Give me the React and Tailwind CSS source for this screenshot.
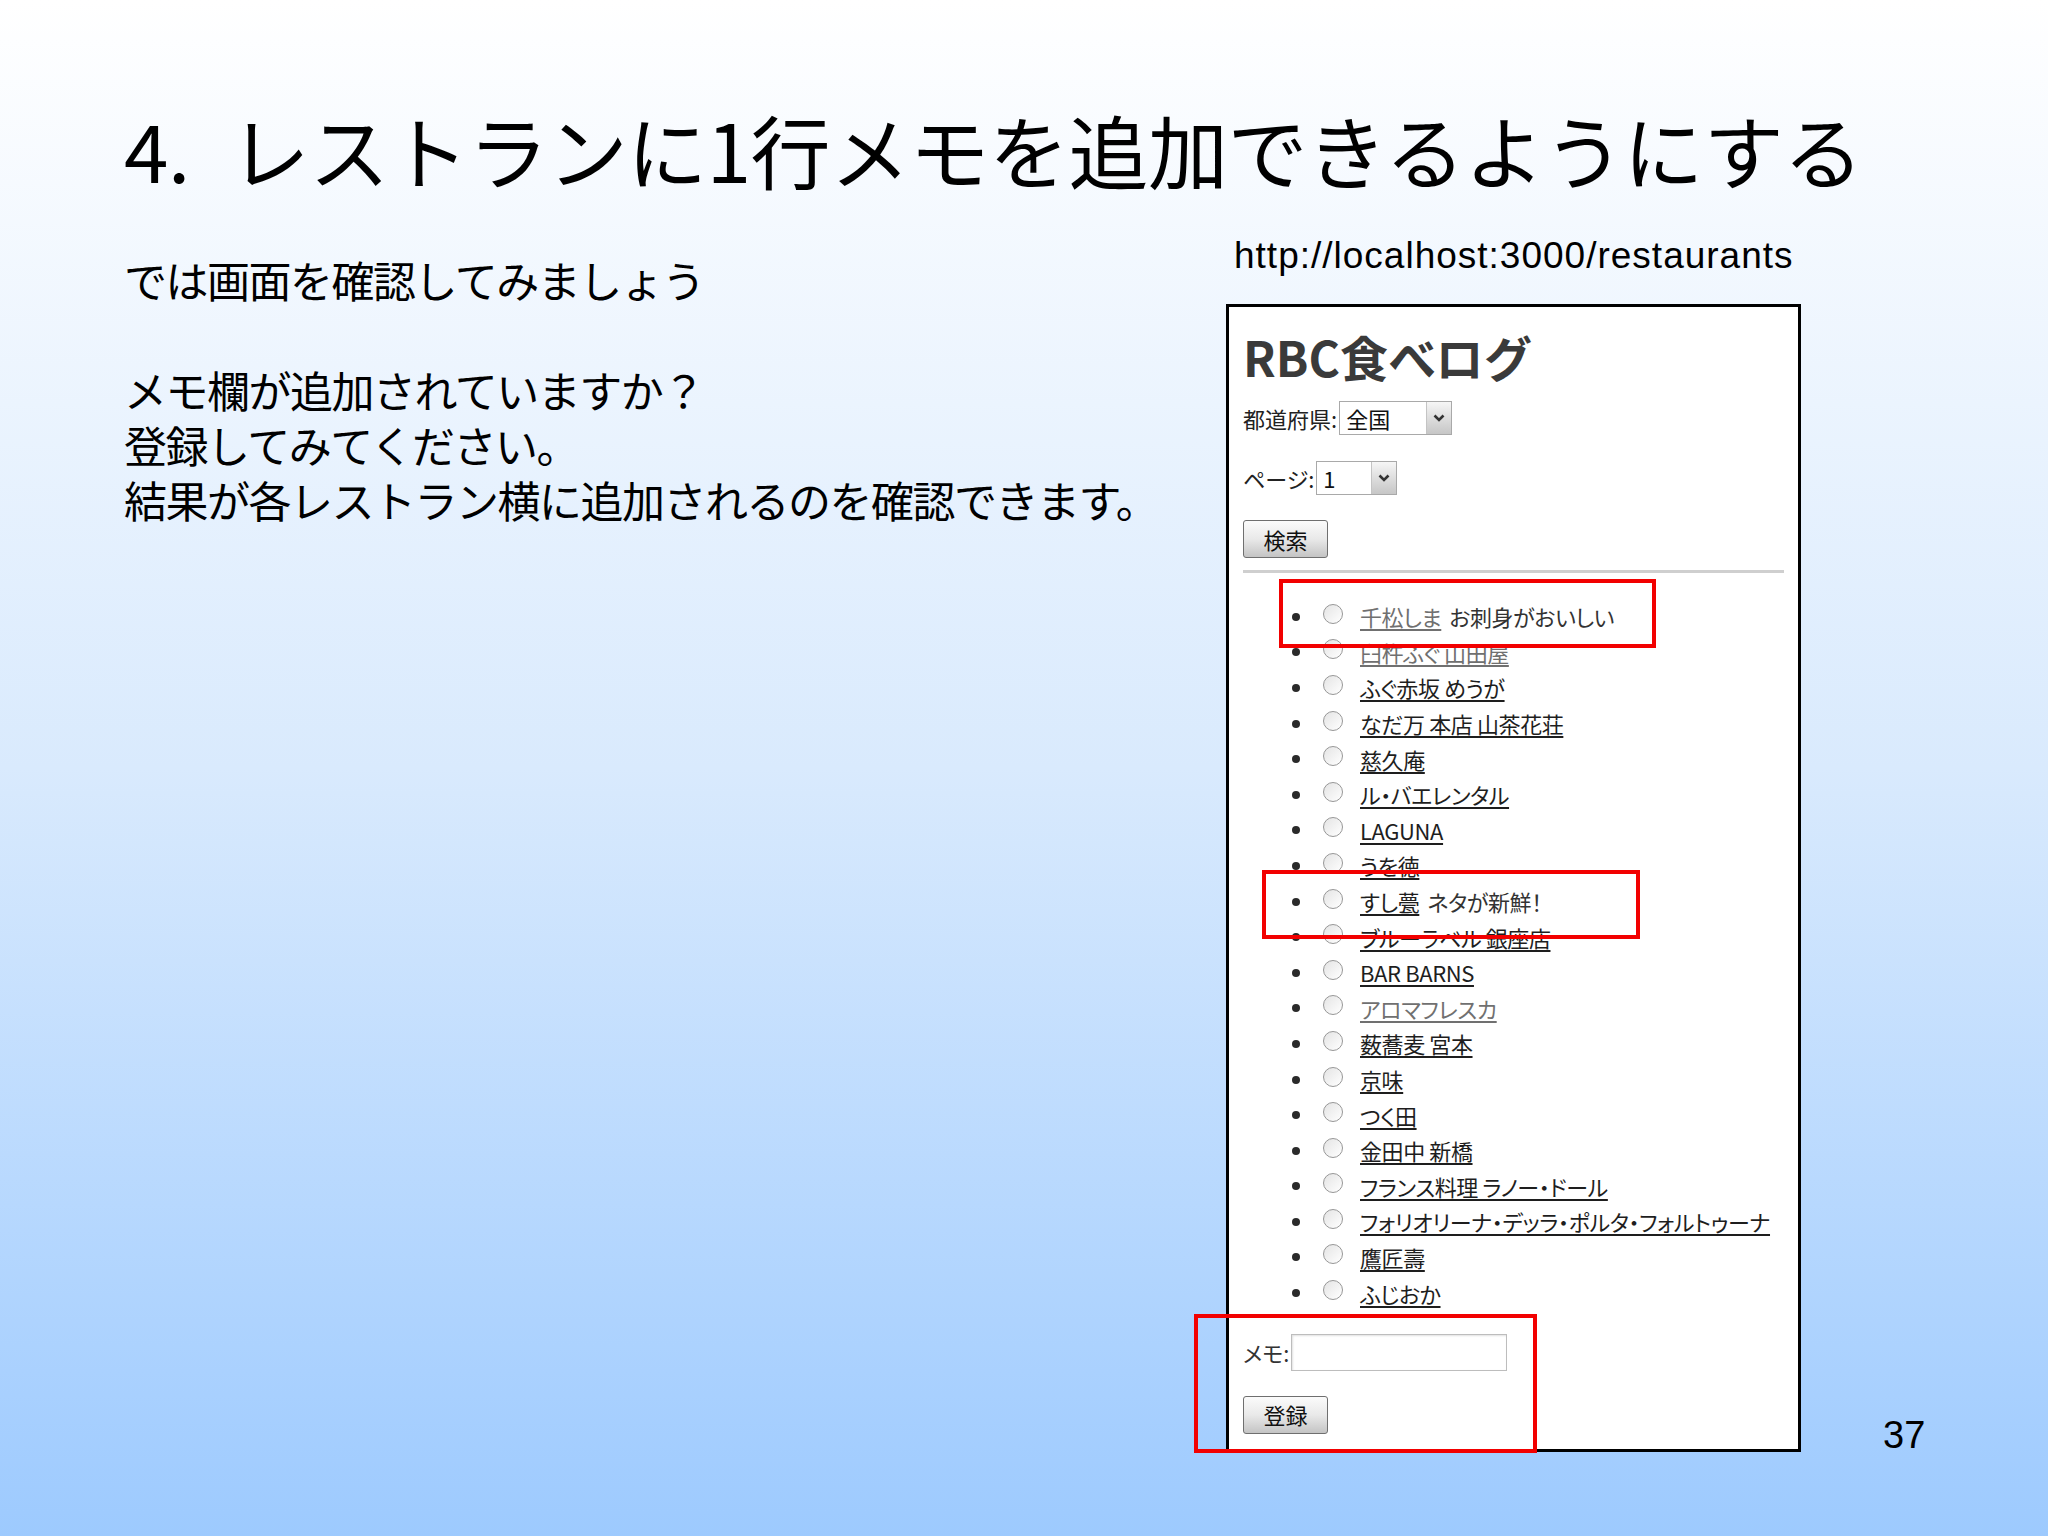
import React from 'react';

const restaurants = [
  { name: '千松しま', memo: 'お刺身がおいしい', visited: true },
  { name: '臼杵ふぐ 山田屋', visited: true },
  { name: 'ふぐ赤坂 めうが' },
  { name: 'なだ万 本店 山茶花荘' },
  { name: '慈久庵' },
  { name: 'ル・バエレンタル' },
  { name: 'LAGUNA' },
  { name: 'うを徳' },
  { name: 'すし甍', memo: 'ネタが新鮮！' },
  { name: 'ブルーラベル 銀座店' },
  { name: 'BAR BARNS' },
  { name: 'アロマフレスカ', visited: true },
  { name: '薮蕎麦 宮本' },
  { name: '京味' },
  { name: 'つく田' },
  { name: '金田中 新橋' },
  { name: 'フランス料理 ラノー・ドール' },
  { name: 'フォリオリーナ・デッラ・ポルタ・フォルトゥーナ' },
  { name: '鷹匠壽' },
  { name: 'ふじおか' },
];

// fake select box like old IE/XP
const SelectBox = ({ value, width }) => (
  <div className={`flex h-[34px] border border-[#a9a9a9] bg-white ${width}`}>
    <span className="flex-1 pl-[6px] leading-[32px] text-[#111]">{value}</span>
    <span className="flex w-[25px] items-center justify-center border-l border-[#c4c4c4] bg-gradient-to-b from-[#f6f6f6] to-[#c6c6c6]">
      <svg width="12" height="8" viewBox="0 0 12 8">
        <path d="M1.5 1.5 L6 6 L10.5 1.5" fill="none" stroke="#333" strokeWidth="2.6" />
      </svg>
    </span>
  </div>
);

const OldButton = ({ label }) => (
  <div className="flex h-[38px] w-[85px] items-center justify-center rounded-[3px] border border-[#6f6f6f] bg-gradient-to-b from-[#fbfbfb] via-[#e9e9e9] to-[#c4c4c4] text-[#111]">
    {label}
  </div>
);

const App = () => {
  return (
    <div className="relative h-[1536px] w-[2048px] overflow-hidden bg-gradient-to-b from-[#ffffff] via-[#d9eafd] to-[#9dcafe] pl-[124px] pt-[109px] font-['Noto_Sans_CJK_JP',sans-serif] text-black">
      <h1 className="flex h-[78px] items-center whitespace-nowrap text-[80px] leading-none tracking-[-0.5px]">
        <span>4.</span>
        <span className="ml-[40px]">レストランに1行メモを追加できるようにする</span>
      </h1>

      <div className="mt-[46px] flex">
        {/* left column */}
        <div className="w-[1102px] pt-[19px] text-[43px] leading-[55px] tracking-[-1.5px]">
          <p>では画面を確認してみましょう</p>
          <p className="mt-[55px]">メモ欄が追加されていますか？</p>
          <p>登録してみてください。</p>
          <p>結果が各レストラン横に追加されるのを確認できます。</p>
        </div>

        {/* right column: browser capture */}
        <div className="w-[575px]">
          <p className="pl-[8px] font-['Liberation_Sans',sans-serif] text-[37px] leading-[46px] tracking-[1px]">
            http://localhost:3000/restaurants
          </p>

          <div className="relative mt-[25px] h-[1148px] border-[3px] border-black bg-white pl-[14px] pr-[14px] text-[22px] text-[#222] [font-feature-settings:'palt']">
            <div className="mt-[21px] flex h-[56px] items-center text-[48px] font-bold text-[#3a3a3a]">
              RBC食べログ
            </div>

            <div className="mt-[17px] flex h-[34px] items-center">
              <span className="mr-[2px]">都道府県:</span>
              <SelectBox value="全国" width="w-[113px]" />
            </div>

            <div className="mt-[26px] flex h-[34px] items-center">
              <span className="mr-[2px]">ページ:</span>
              <SelectBox value="1" width="w-[81px]" />
            </div>

            <div className="mt-[25px] flex">
              <OldButton label="検索" />
            </div>

            <div className="mt-[12px] h-[3px] bg-[#cfcfcf]" />

            <ul className="mt-[26px]">
              {restaurants.map((r) => (
                <li key={r.name} className="flex h-[35.6px] items-center whitespace-nowrap pl-[49px] tracking-[-0.4px]">
                  <span className="h-[8px] w-[8px] shrink-0 rounded-full bg-[#2a2a2a]" />
                  <span className="mb-[6px] ml-[23px] h-[20px] w-[20px] shrink-0 rounded-full border-[1.5px] border-[#979797] bg-gradient-to-br from-[#e4e4e4] to-[#ffffff]" />
                  <span
                    className={`ml-[17px] underline underline-offset-[3px] ${r.visited ? 'text-[#707070]' : 'text-[#1e1e1e]'}`}
                  >
                    {r.name}
                  </span>
                  {r.memo && <span className="ml-[8px] text-[#333]">{r.memo}</span>}
                </li>
              ))}
            </ul>

            <div className="mt-[23px] flex h-[37px] items-center">
              <span className="w-[48px] text-[#333]">メモ:</span>
              <div className="h-[37px] w-[216px] border border-[#bdbdbd] bg-white shadow-[inset_1px_1px_2px_rgba(0,0,0,0.12)]" />
            </div>

            <div className="mt-[25px] flex">
              <OldButton label="登録" />
            </div>

            {/* red highlight boxes */}
            <div className="absolute left-[50px] top-[272px] h-[69px] w-[377px] border-4 border-[#f20000]" />
            <div className="absolute left-[33px] top-[563px] h-[69px] w-[378px] border-4 border-[#f20000]" />
            <div className="absolute left-[-35px] top-[1007px] h-[139px] w-[343px] border-4 border-[#f20000]" />
          </div>
        </div>

        <div className="flex flex-1 items-end pl-[82px]">
          <span className="mb-[-2px] font-['Liberation_Sans',sans-serif] text-[38px] leading-[38px]">37</span>
        </div>
      </div>
    </div>
  );
};

export default App;
